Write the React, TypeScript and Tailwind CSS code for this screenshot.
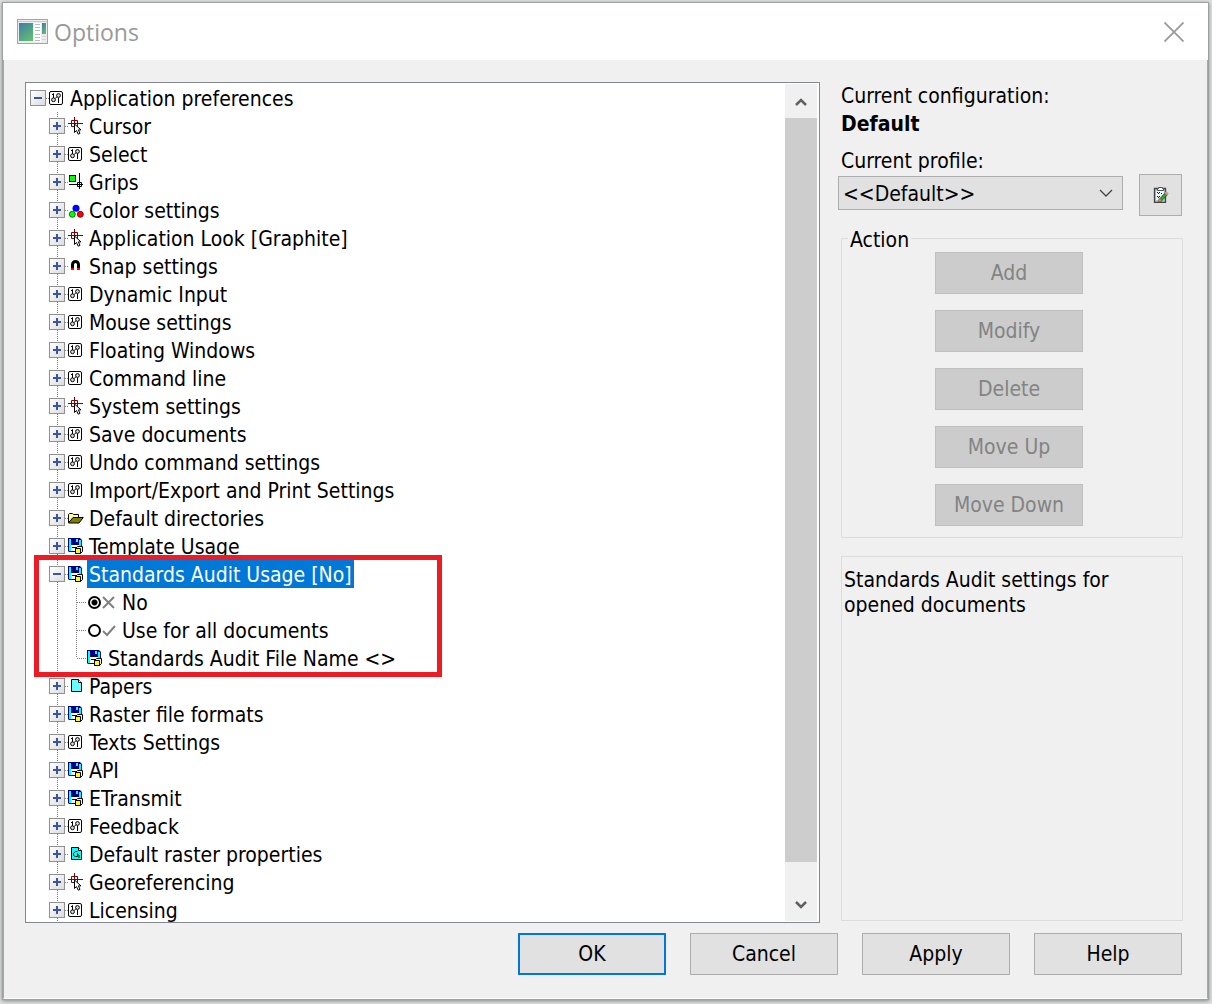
import React, { useState } from "react";

type IconName = "sliders" | "cursor" | "grips" | "colors" | "magnet" | "folder" | "save" | "paper" | "raster";

type TreeItem = {
  label: string;
  icon: IconName;
};

const before: TreeItem[] = [
  { label: "Cursor", icon: "cursor" },
  { label: "Select", icon: "sliders" },
  { label: "Grips", icon: "grips" },
  { label: "Color settings", icon: "colors" },
  { label: "Application Look [Graphite]", icon: "cursor" },
  { label: "Snap settings", icon: "magnet" },
  { label: "Dynamic Input", icon: "sliders" },
  { label: "Mouse settings", icon: "sliders" },
  { label: "Floating Windows", icon: "sliders" },
  { label: "Command line", icon: "sliders" },
  { label: "System settings", icon: "cursor" },
  { label: "Save documents", icon: "sliders" },
  { label: "Undo command settings", icon: "sliders" },
  { label: "Import/Export and Print Settings", icon: "sliders" },
  { label: "Default directories", icon: "folder" },
  { label: "Template Usage", icon: "save" },
];

const after: TreeItem[] = [
  { label: "Papers", icon: "paper" },
  { label: "Raster file formats", icon: "save" },
  { label: "Texts Settings", icon: "sliders" },
  { label: "API", icon: "save" },
  { label: "ETransmit", icon: "save" },
  { label: "Feedback", icon: "sliders" },
  { label: "Default raster properties", icon: "raster" },
  { label: "Georeferencing", icon: "cursor" },
  { label: "Licensing", icon: "sliders" },
];

const actions = ["Add", "Modify", "Delete", "Move Up", "Move Down"];

const shapes: Record<IconName, React.ReactNode> = {
  sliders: (
    <g fill="none" stroke="#000">
      <rect x="0.5" y="2.5" width="13" height="13" rx="1.5" fill="#fff" />
      <path d="M4.500 4.500v4.500M3 6l1.500-1.500M9.500 8.500V14" />
      <circle cx="4.5" cy="10.8" r="1.9" fill="#ddd" />
      <circle cx="9.5" cy="6.5" r="1.9" fill="#ddd" />
      <path d="M6 9.500l2-1.500" strokeWidth="0.8" />
    </g>
  ),
  cursor: (
    <g>
      <path d="M0 6.5h15M6.5 0v11M3.5 3.5h6v6h-6z" fill="none" stroke="#800000" />
      <path d="M6.5 7v8.5l2-2 1.7 3.7 1.8-.8-1.6-3.5h2.6z" fill="#fff" stroke="#000" />
    </g>
  ),
  grips: (
    <g stroke="#000" fill="none">
      <rect x="1.5" y="2.5" width="6" height="6" fill="#00ff00" />
      <path d="M11.5 0v16M1 11.5h14M9.500 9.500h4v4h-4z" />
    </g>
  ),
  colors: (
    <g>
      <circle cx="8" cy="7.3" r="3.5" fill="#0000ff" />
      <circle cx="4.3" cy="13.3" r="3" fill="#00ff00" stroke="#005000" strokeWidth="0.8" />
      <circle cx="12.3" cy="13.3" r="3" fill="#ff0000" stroke="#500000" strokeWidth="0.8" />
    </g>
  ),
  magnet: (
    <g fill="none" strokeWidth="3">
      <path d="M4.5 11V7.5a3 3 0 0 1 6 0V11" stroke="#000" />
      <path d="M4.5 11v2M10.5 11v2" stroke="#ff0000" />
    </g>
  ),
  folder: (
    <g stroke="#000">
      <path d="M.5 13.500v-8l1-1h3l1 1h5v3h-5z" fill="#ffff99" />
      <path d="M.5 14l4.500-5.500h10.300l-4.300 5.500z" fill="#808000" />
    </g>
  ),
  save: (
    <g>
      <path d="M0 1h12l2 2v12H1l-1-1z" fill="#000080" />
      <path d="M1 2h2v12H1zM11 3h2v11h-2z" fill="#00ffff" />
      <path d="M8 2h2v3H8z" fill="#00ffff" />
      <path d="M3 8h8v6H3z" fill="#fff" />
      <path d="M4 10h4v1H4z" fill="#000080" />
      <path d="M7.500 11.500l2-2h5v5l-2 2h-5z" fill="#ffff80" stroke="#000" />
      <path d="M7.500 11.500h5v5h-5z" fill="#ffff00" stroke="#000" />
    </g>
  ),
  paper: (
    <g stroke="#000">
      <path d="M3.500 2.500h7l3 3v9h-10z" fill="#66ffff" />
      <path d="M10.500 2.500v3h3" fill="#fff" />
    </g>
  ),
  raster: (
    <g stroke="#000" fill="none">
      <path d="M3.500 2.500h7l3 3v9h-10z" fill="#00ffff" />
      <path d="M10.500 2.500v3h3" fill="#fff" />
      <path d="M9.500 6.500h-2l-2 2v2l2 1h2v-3l2 4" />
      <path d="M10 10h2v3h-2z" fill="#00a000" stroke="none" />
    </g>
  ),
};

function TreeIcon({ name }: { name: IconName }) {
  return (
    <svg className="h-[18px] w-4 shrink-0" viewBox="0 0 16 18" aria-hidden="true">
      {shapes[name]}
    </svg>
  );
}

const dotsV = "w-px bg-[repeating-linear-gradient(to_bottom,#808080_0_1px,transparent_1px_2px)]";
const dotsH = "h-px bg-[repeating-linear-gradient(to_right,#808080_0_1px,transparent_1px_2px)]";
const labelText = "px-0.5 pt-0.5 leading-[26px]";

// The expander box with the dotted guide running above and below it
function Expander({ open, guide, label, onClick }: { open: boolean; guide: boolean; label: string; onClick?: () => void }) {
  return (
    <div className="flex h-7 w-4 shrink-0 flex-col">
      <span className={`ml-2 flex-1 ${guide ? dotsV : ""}`} />
      <button
        type="button"
        aria-label={`${open ? "Collapse" : "Expand"} ${label}`}
        onClick={onClick}
        className="size-4 border border-[#919191] bg-linear-to-br from-white to-[#dcdcdc]"
      >
        <svg className="size-3.5" viewBox="0 0 14 14" aria-hidden="true">
          <path d={open ? "M3 7h8" : "M3 7h8M7 3v8"} stroke="#3c55a0" strokeWidth="2" />
        </svg>
      </button>
      <span className={`ml-2 flex-1 ${guide ? dotsV : ""}`} />
    </div>
  );
}

function Row({ item, selected, open, onToggle }: { item: TreeItem; selected?: boolean; open?: boolean; onToggle?: () => void }) {
  return (
    <div className="flex h-7 items-center pl-[23px]">
      <Expander open={!!open} guide label={item.label} onClick={onToggle} />
      <span className={`w-[3px] ${dotsH}`} />
      <TreeIcon name={item.icon} />
      <span className={`ml-[3px] ${labelText} ${selected ? "bg-[#0078d7] text-white" : ""}`}>{item.label}</span>
    </div>
  );
}

function ChildRow({ children, last }: { children: React.ReactNode; last?: boolean }) {
  return (
    <div className="flex h-7 items-center pl-[31px]">
      <span className={`h-7 ${dotsV}`} />
      <span className={`ml-[18px] self-start ${last ? "h-3.5" : "h-7"} ${dotsV}`} />
      <span className={`w-2.5 ${dotsH}`} />
      {children}
    </div>
  );
}

function AuditRadio({ id, checked, mark, label, onChange }: { id: string; checked: boolean; mark: string; label: string; onChange: () => void }) {
  return (
    <>
      <input
        id={id}
        type="radio"
        name="audit"
        checked={checked}
        onChange={onChange}
        className="ml-px size-[13px] shrink-0 appearance-none rounded-full border-2 border-black bg-white checked:bg-[radial-gradient(circle,#000_0_2.5px,#fff_3.5px)]"
      />
      <svg className="ml-px h-[13px] w-3.5 shrink-0" viewBox="0 0 14 13" fill="none" stroke="#808080" aria-hidden="true">
        <path d={mark} strokeWidth="2" />
      </svg>
      <label htmlFor={id} className={`ml-1 ${labelText}`}>
        {label}
      </label>
    </>
  );
}

function ScrollBar() {
  return (
    <div className="my-px mr-0.5 flex w-8 shrink-0 flex-col bg-[#f0f0f0]">
      <button type="button" aria-label="Scroll up" className="flex h-[34px] items-center justify-center">
        <svg className="h-2.5 w-3" viewBox="0 0 12 10" fill="none" stroke="#606060" strokeWidth="2.5" aria-hidden="true">
          <path d="M1 9l5-5 5 5" />
        </svg>
      </button>
      <div className="flex-[743] bg-[#cdcdcd]" />
      <div className="flex-[25]" />
      <button type="button" aria-label="Scroll down" className="flex h-[34px] items-center justify-center">
        <svg className="h-2.5 w-3" viewBox="0 0 12 10" fill="none" stroke="#606060" strokeWidth="2.5" aria-hidden="true">
          <path d="M1 3l5 5 5-5" />
        </svg>
      </button>
    </div>
  );
}

function PreferenceTree() {
  const [open, setOpen] = useState(true);
  const [audit, setAudit] = useState("no");

  return (
    <div className="flex min-h-0 min-w-0 flex-1 border border-[#828790] bg-white">
      <div className="min-w-0 flex-1 overflow-hidden pt-px whitespace-nowrap">
        <div className="flex h-7 items-center pl-1">
          <Expander open guide={false} label="Application preferences" />
          <span className={`w-[3px] ${dotsH}`} />
          <TreeIcon name="sliders" />
          <span className={`ml-[3px] ${labelText}`}>Application preferences</span>
        </div>
        {before.map((item) => (
          <Row key={item.label} item={item} />
        ))}

        <div className="relative">
          <Row item={{ label: "Standards Audit Usage [No]", icon: "save" }} selected open={open} onToggle={() => setOpen(!open)} />
          {open && (
            <>
              <ChildRow>
                <AuditRadio id="audit-no" checked={audit === "no"} mark="M1 1l11 11M12 1L1 12" label="No" onChange={() => setAudit("no")} />
              </ChildRow>
              <ChildRow>
                <AuditRadio id="audit-all" checked={audit === "all"} mark="M1 7l4 4 8-9" label="Use for all documents" onChange={() => setAudit("all")} />
              </ChildRow>
              <ChildRow last>
                <TreeIcon name="save" />
                <span className={`ml-[3px] ${labelText}`}>Standards Audit File Name &lt;&gt;</span>
              </ChildRow>
            </>
          )}
          <div className="pointer-events-none absolute -top-[5px] -bottom-[5px] left-2 w-[408px] border-[5px] border-[#ed1c24]" />
        </div>

        {after.map((item) => (
          <Row key={item.label} item={item} />
        ))}
      </div>
      <ScrollBar />
    </div>
  );
}

function ProfilePanel() {
  return (
    <div className="flex w-[345px] shrink-0 flex-col">
      <div className="pl-[3px] leading-7">Current configuration:</div>
      <div className="pl-[3px] leading-7 font-bold">Default</div>
      <label htmlFor="profile" className="mt-2 pt-0.5 pl-[3px] leading-[26px]">
        Current profile:
      </label>
      <div className="flex items-start justify-between pr-px">
        <div className="relative mt-0.5 w-[285px]">
          <select id="profile" className="h-[34px] w-full appearance-none border border-[#adadad] bg-[#e1e1e1] pt-0.5 pl-1">
            <option>&lt;&lt;Default&gt;&gt;</option>
          </select>
          <svg className="pointer-events-none absolute top-3 right-2.5 h-2.5 w-3.5" viewBox="0 0 14 10" fill="none" stroke="#444" strokeWidth="1.3" aria-hidden="true">
            <path d="M1 2l6 6 6-6" />
          </svg>
        </div>
        <button type="button" aria-label="Edit profiles" className="flex h-[42px] w-[43px] items-center justify-center border border-[#adadad] bg-[#e1e1e1]">
          <svg className="size-4" viewBox="0 0 16 16" aria-hidden="true">
            <path d="M1.500 1.500h11v14h-11z" fill="#a9c8d6" stroke="#444" strokeWidth="1.300" />
            <path d="M3 4h8v9H3z" fill="#eef6fa" />
            <path d="M4.500 3.500v-2h1v-1h4v1h1v2z" fill="#fff" stroke="#555" />
            <path d="M4 5h1v1H4zM5 6h1v1H5zM6 5h1v1H6zM4 9h1v1H4zM5 10h1v1H5zM6 9h1v1H6zM8 6h1v1H8z" fill="#111" />
            <path d="M8 12.500l5.500-6" stroke="#185c18" strokeWidth="3.500" />
            <path d="M8 12.500l5.500-6" stroke="#35a035" strokeWidth="2.500" />
            <path d="M12.800 7.200l1.700-1.900" stroke="#ef8b8b" strokeWidth="3.500" />
            <path d="M5.300 15.200l.8-3.700 2.800 2.500z" fill="#e8a050" stroke="#803010" strokeWidth="0.6" />
          </svg>
        </button>
      </div>

      <fieldset className="relative mt-[22px] ml-[3px] flex h-[300px] flex-col items-center gap-4 border border-[#dcdcdc] pt-[13px] pr-1.5">
        <legend className="absolute -top-[13px] left-1.5 bg-[#f0f0f0] px-0.5 leading-7">Action</legend>
        {actions.map((name) => (
          <button key={name} type="button" disabled className="h-[42px] w-[148px] shrink-0 border border-[#bfbfbf] bg-[#cccccc] pt-0.5 text-[#838383]">
            {name}
          </button>
        ))}
      </fieldset>

      <div className="mt-[18px] mb-0.5 ml-[3px] flex-1 border border-[#dcdcdc] px-0.5 pt-[11px] leading-[25px]">
        Standards Audit settings for opened documents
      </div>
    </div>
  );
}

export default function App() {
  return (
    <div className="flex h-screen min-h-[760px] flex-col bg-[#dfe1e0] pt-0.5 pr-[3px] pb-1 pl-0.5 font-['DejaVu_Sans_Condensed','DejaVu_Sans',sans-serif] text-[21px] text-black">
      <div className="flex min-h-0 flex-1 flex-col border border-[#a0a0a0] bg-[#f0f0f0] shadow-[0_1px_4px_#00000066]">
        <header className="flex h-[57px] shrink-0 items-center justify-between bg-white pr-6 pl-3.5">
          <div className="flex items-center gap-1.5">
            <svg className="h-[26px] w-[31px]" viewBox="0 0 31 26" aria-hidden="true">
              <defs>
                <linearGradient id="screen" x1="0" y1="0" x2="0.6" y2="1">
                  <stop offset="0" stopColor="#3b7fa6" />
                  <stop offset="1" stopColor="#62b877" />
                </linearGradient>
              </defs>
              <rect x="0.5" y="0.5" width="30" height="24" fill="#ececef" stroke="#a3a5aa" />
              <path d="M1 2.500h29" stroke="#c8cbd8" />
              <rect x="2" y="4" width="14" height="18" fill="url(#screen)" />
              <path d="M17 4h7v19h-7z" fill="#fff" />
              <path d="M18 5.500h5M18 8.500h5M18 11.500h5M18 15.500h5M18 18.500h5M18 21.500h5" stroke="#b8babd" />
              <rect x="25" y="4" width="4" height="11" fill="url(#screen)" />
              <path d="M25 17.500h4M25 20.500h4" stroke="#d5d6d8" />
            </svg>
            <h1 className="font-['Open_Sans',sans-serif] text-[23px] leading-7 text-[#999999]">Options</h1>
          </div>
          <button type="button" aria-label="Close">
            <svg className="size-5" viewBox="0 0 20 20" stroke="#999" strokeWidth="1.800" aria-hidden="true">
              <path d="M.5.5l19 19M19.500.5l-19 19" />
            </svg>
          </button>
        </header>

        <main className="flex min-h-0 flex-1 flex-col border-x border-b border-x-[#a8a8a8] border-b-white pt-[22px] pr-[22px] pb-[23px] pl-[21px]">
          <div className="flex min-h-0 flex-1 gap-[18px] pr-0.5">
            <PreferenceTree />
            <ProfilePanel />
          </div>
          <div className="mt-2.5 flex justify-end gap-6 pr-[3px]">
            <button type="button" className="h-[42px] w-[148px] border-2 border-[#0078d7] bg-[#e1e1e1] pt-0.5">
              OK
            </button>
            {["Cancel", "Apply", "Help"].map((name) => (
              <button key={name} type="button" className="h-[42px] w-[148px] border border-[#adadad] bg-[#e1e1e1] pt-0.5">
                {name}
              </button>
            ))}
          </div>
        </main>
      </div>
    </div>
  );
}
